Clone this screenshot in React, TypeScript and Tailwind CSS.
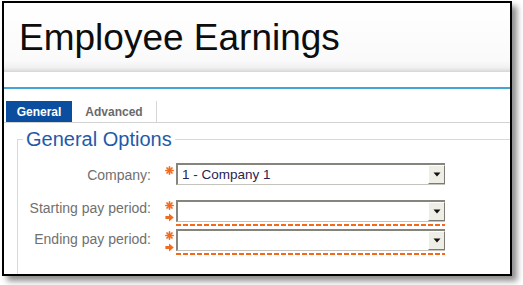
import React from 'react'

const orange = '#f26b1d'

function Star() {
  return (
    <svg width="9" height="9" viewBox="0 0 9 9" className="block">
      <g stroke={orange} strokeWidth="1.7" strokeLinecap="round">
        <line x1="4.5" y1="0.9" x2="4.5" y2="8.1" />
        <line x1="0.9" y1="4.5" x2="8.1" y2="4.5" />
        <line x1="2" y1="2" x2="7" y2="7" />
        <line x1="7" y1="2" x2="2" y2="7" />
      </g>
    </svg>
  )
}

function Arrow() {
  return (
    <svg width="9" height="9" viewBox="0 0 9 9" className="block">
      <path d="M0.4 2.9H4V0.4L8.8 4.5L4 8.6V6.1H0.4Z" fill={orange} />
    </svg>
  )
}

function Select({ value }: { value?: string }) {
  return (
    <div className="flex h-[22px] w-[269px] border-t-2 border-l-2 border-b border-[#85857d] border-b-[#c4c4bc] bg-white">
      <div className="flex-1 pl-[4px] text-[13.5px] leading-[20px] text-[#2b2352]">{value}</div>
      <div className="flex w-[17px] items-center justify-center border-t border-l border-white border-r border-b border-r-[#7b7b73] border-b-[#7b7b73] bg-[#eeede6]">
        <svg width="8" height="5" viewBox="0 0 8 5">
          <path d="M0.5 0.5H7.5L4 4.5Z" fill="#111" />
        </svg>
      </div>
    </div>
  )
}

function Dashes() {
  return <div className="mt-[2px] h-[2px] w-[269px] bg-[repeating-linear-gradient(90deg,#f6691a_0_5px,transparent_5px_7px)]" />
}

export default function App() {
  return (
    <div className="h-[285px] w-[523px] overflow-hidden bg-white font-['Liberation_Sans',Arial,sans-serif]">
      <div className="ml-[2px] mt-[1px] flex h-[275px] w-[510px] flex-col overflow-hidden border-2 border-black bg-white shadow-[5px_5px_6px_rgba(0,0,0,0.45)]">
        {/* page title */}
        <div className="h-[69px] shrink-0 bg-[linear-gradient(to_bottom,#ffffff_0%,#fafafb_84%,#f0f0f2_94%,#d6d6da_100%)] pl-[15px] pt-[16px]">
          <h1 className="text-[37px] leading-[37px] text-[#0d0d0d]">Employee Earnings</h1>
        </div>

        <div className="mt-[15px] h-[2px] shrink-0 bg-[#45a4d6]" />

        {/* tabs */}
        <div className="mt-[12px] flex h-[22px] shrink-0 border-b border-[#d2d2d2]">
          <div className="ml-[2px] flex h-[21px] w-[66px] items-center justify-center bg-[#0b4ea0] text-[12px] font-bold text-white">
            General
          </div>
          <div className="flex h-[21px] w-[85px] items-center justify-center border-r border-[#d6d6d6] text-[12px] font-bold text-[#6a6a6a]">
            Advanced
          </div>
        </div>

        <fieldset className="ml-[13px] mt-[5px] min-h-0 flex-1 border-t border-l border-[#d9d9d9]">
          <legend className="ml-[5px] px-[3px] text-[20px] leading-[22px] text-[#1f5aa8]">General Options</legend>

          <div className="flex flex-col pt-[13px] text-[14px] text-[#707070]">
            <div className="flex">
              <div className="w-[133px] pt-[2px] text-right leading-[20px]">Company:</div>
              <div className="w-[25px] pl-[14px] pt-[3px]">
                <Star />
              </div>
              <Select value="1 - Company 1" />
            </div>

            <div className="mt-[15px] flex">
              <div className="-mt-[2px] w-[133px] text-right leading-[20px]">Starting pay period:</div>
              <div className="flex w-[25px] flex-col gap-[3px] pl-[14px] pt-[1px]">
                <Star />
                <Arrow />
              </div>
              <div>
                <Select />
                <Dashes />
              </div>
            </div>

            <div className="mt-[3px] flex">
              <div className="w-[133px] text-right leading-[20px]">Ending pay period:</div>
              <div className="flex w-[25px] flex-col gap-[3px] pl-[14px] pt-[2px]">
                <Star />
                <Arrow />
              </div>
              <div>
                <Select />
                <Dashes />
              </div>
            </div>
          </div>
        </fieldset>
      </div>
    </div>
  )
}
